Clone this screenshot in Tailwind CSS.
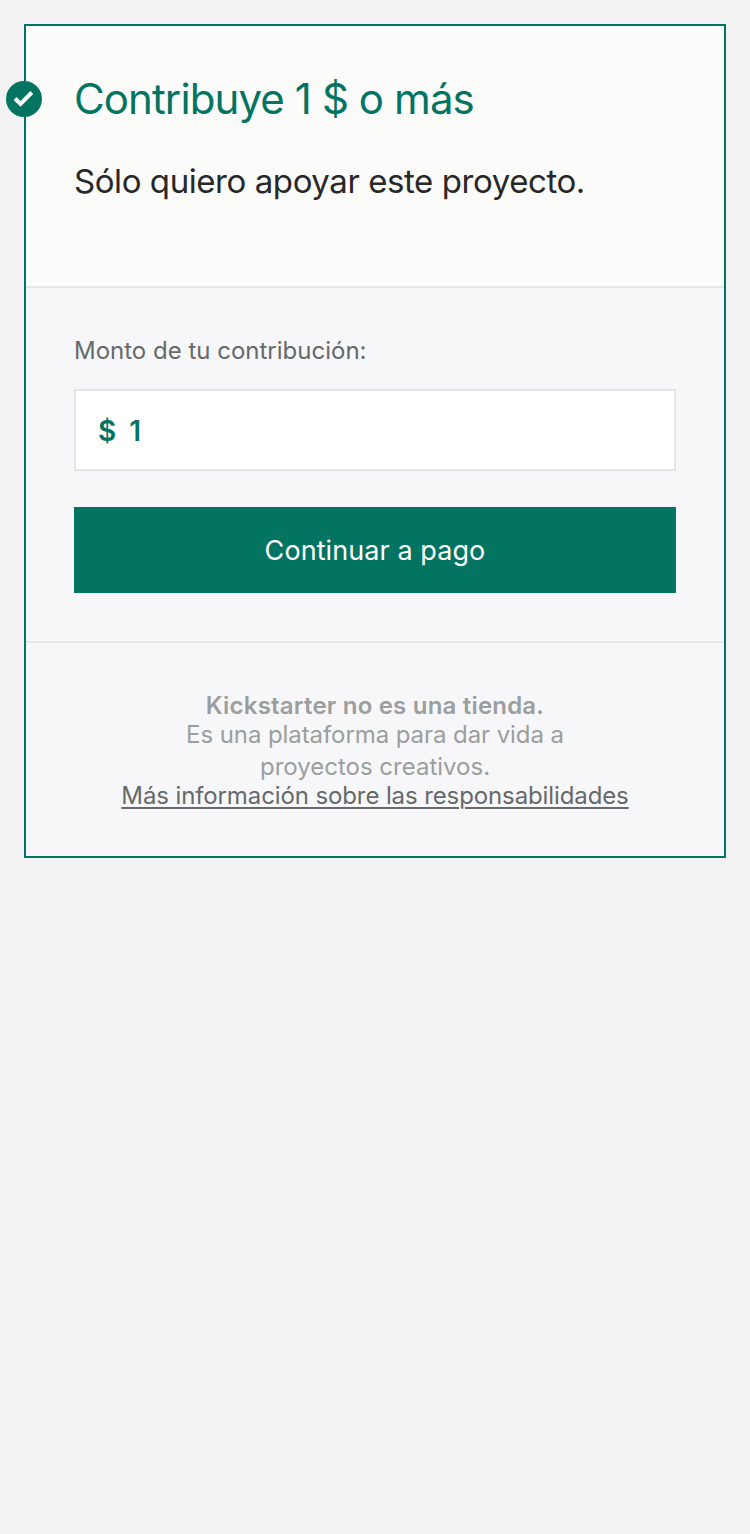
<!DOCTYPE html>
<html lang="es">
<head>
<meta charset="utf-8">
<title>Contribuye</title>
<script src="https://cdn.jsdelivr.net/npm/@tailwindcss/browser@4"></script>
</head>
<body class="min-h-screen bg-[#f2f2f2] p-6 font-['Inter',sans-serif] antialiased">
<main class="relative h-[834px] border-2 border-[#037362] bg-[#f7f7f9]">
  <div class="absolute -left-5 top-[55px] flex size-9 items-center justify-center rounded-full bg-[#037362]">
    <svg class="size-9" viewBox="0 0 36 36" fill="none" stroke="#fff" stroke-width="4"><path d="M9 17.5 14.5 23 25.8 11.5"/></svg>
  </div>
  <section class="h-[262px] border-b-2 border-[#e6e6e6] bg-[#fbfbfa] px-12 pt-[46px]">
    <h1 class="whitespace-nowrap text-[42px] leading-[54px] tracking-[-0.9px] text-[#037362]"><span>Contribuye 1 $ o más</span></h1>
    <p class="mt-7 whitespace-nowrap text-[33px] leading-[54px] tracking-[-0.43px] text-[#282828]"><span>Sólo quiero apoyar este proyecto.</span></p>
  </section>
  <section class="h-[355px] border-b-2 border-[#e6e6e6] px-12 pt-[47px]">
    <label class="block text-2xl leading-8 text-[#656969]"><span>Monto de tu contribución:</span></label>
    <div class="mt-[22px] flex h-[82px] items-center gap-[13px] border-2 border-[#e6e6e6] bg-white px-[22px] pt-px text-[28px] font-semibold text-[#037362]"><span>$</span><span>1</span></div>
    <button class="mt-9 block h-[86px] w-full bg-[#037362] pt-[3px] text-[27px] tracking-[0.08px] text-white"><span>Continuar a pago</span></button>
  </section>
  <footer class="pt-[50px] text-center text-2xl leading-8 text-[#9b9e9e]">
    <p class="font-semibold leading-[26px] tracking-[0.2px]"><span>Kickstarter no es una tienda.</span></p>
    <p><span class="tracking-[-0.08px]">Es una plataforma para dar vida a</span><br><span>proyectos creativos.</span></p>
    <p class="leading-[26px] tracking-[-0.11px]"><a class="text-[#656969] underline decoration-2 underline-offset-[3px]">Más información sobre las responsabilidades</a></p>
  </footer>
</main>
</body>
</html>
